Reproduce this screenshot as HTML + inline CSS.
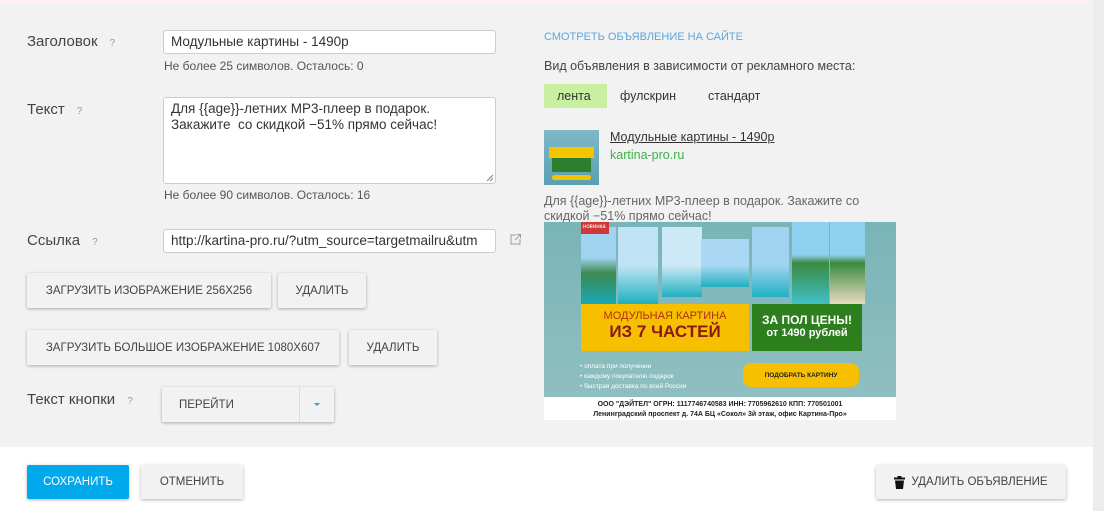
<!DOCTYPE html>
<html><head><meta charset="utf-8"><style>
*{margin:0;padding:0;box-sizing:border-box}
body{width:1104px;height:511px;overflow:hidden;background:#fff;font-family:"Liberation Sans",sans-serif;position:relative}
.panel{position:absolute;left:0;top:0;width:1093px;height:447px;background:#f2f2f2;border-top:3px solid #fdeff3}
.side{position:absolute;left:1093px;top:0;width:11px;height:511px;background:#ececec}
.a{position:absolute}
.lbl{font-size:15px;color:#444}
.q{font-size:10px;color:#999;margin-left:12px}
.inp{background:#fff;border:1px solid #ccc;border-radius:3px;font-size:13.5px;color:#333;padding:3px 7px;white-space:nowrap;overflow:hidden}
.hint{font-size:12px;color:#555}
.btn{background:#f2f2f2;border-radius:2px;box-shadow:0 1px 3px rgba(0,0,0,.3);font-size:11.5px;color:#444;display:flex;align-items:center;justify-content:center}
</style></head><body>
<div class="panel"></div><div class="side"></div>

<div class="a lbl" style="left:27px;top:33px">Заголовок<span class="q">?</span></div>
<div class="a inp" style="left:163px;top:30px;width:333px;height:24px">Модульные картины - 1490р</div>
<div class="a hint" style="left:164px;top:59px">Не более 25 символов. Осталось: 0</div>

<div class="a lbl" style="left:27px;top:101px">Текст<span class="q">?</span></div>
<div class="a inp" style="left:163px;top:97px;width:333px;height:87px;white-space:normal;line-height:16px;padding-top:3px">Для {{age}}-летних MP3-плеер в подарок.<br>Закажите&nbsp; со скидкой −51% прямо сейчас!</div>
<svg class="a" style="left:486px;top:174px" width="8" height="8"><path d="M1 7L7 1M4 7L7 4" stroke="#888"/></svg>
<div class="a hint" style="left:164px;top:188px">Не более 90 символов. Осталось: 16</div>

<div class="a lbl" style="left:27px;top:232px">Ссылка<span class="q">?</span></div>
<div class="a inp" style="left:163px;top:229px;width:333px;height:24px">http://kartina-pro.ru/?utm_source=targetmailru&amp;utm</div>
<svg class="a" style="left:508px;top:232px" width="14" height="14"><path d="M8 3H3v9h9V7" stroke="#999" fill="none"/><path d="M7 8L12 3M9 2.5h3.5V6" stroke="#999" fill="none"/></svg>

<div class="a btn" style="left:27px;top:273px;width:244px;height:35px">ЗАГРУЗИТЬ ИЗОБРАЖЕНИЕ 256X256</div>
<div class="a btn" style="left:278px;top:273px;width:88px;height:35px">УДАЛИТЬ</div>
<div class="a btn" style="left:27px;top:330px;width:312px;height:35px">ЗАГРУЗИТЬ БОЛЬШОЕ ИЗОБРАЖЕНИЕ 1080X607</div>
<div class="a btn" style="left:349px;top:330px;width:88px;height:35px">УДАЛИТЬ</div>

<div class="a lbl" style="left:27px;top:391px">Текст кнопки<span class="q">?</span></div>
<div class="a btn" style="left:162px;top:387px;width:172px;height:35px;justify-content:flex-start;padding-left:17px">ПЕРЕЙТИ</div>
<div class="a" style="left:299px;top:387px;width:1px;height:35px;background:#ddd"></div>
<div class="a" style="left:314px;top:403px;width:0;height:0;border-left:3px solid transparent;border-right:3px solid transparent;border-top:3px solid #3a9ad9"></div>

<div class="a btn" style="left:27px;top:465px;width:102px;height:34px;background:#00a8ec;color:#fff">СОХРАНИТЬ</div>
<div class="a btn" style="left:141px;top:465px;width:102px;height:34px">ОТМЕНИТЬ</div>
<div class="a btn" style="left:876px;top:465px;width:190px;height:34px"><svg width="11" height="13" style="margin-right:6px"><rect x="0" y="1.5" width="11" height="2" fill="#111"/><rect x="3.5" y="0" width="4" height="2" fill="#111"/><path d="M1 4.5h9l-1 8.5H2z" fill="#111"/></svg>УДАЛИТЬ ОБЪЯВЛЕНИЕ</div>

<div class="a" style="left:544px;top:31px;font-size:11px;color:#5aa7dd">СМОТРЕТЬ ОБЪЯВЛЕНИЕ НА САЙТЕ</div>
<div class="a" style="left:544px;top:59px;font-size:12.5px;color:#444">Вид объявления в зависимости от рекламного места:</div>
<div class="a" style="left:544px;top:84px;width:63px;height:24px;background:#c8f0a0"></div>
<div class="a" style="left:557px;top:89px;font-size:12.5px;color:#333">лента</div>
<div class="a" style="left:620px;top:89px;font-size:12.5px;color:#333">фулскрин</div>
<div class="a" style="left:708px;top:89px;font-size:12.5px;color:#333">стандарт</div>

<div class="a" style="left:544px;top:130px;width:55px;height:55px;background:linear-gradient(#7fb8c8,#5aa0b0)">
<div class="a" style="left:5px;top:17px;width:45px;height:11px;background:#f5c400"></div>
<div class="a" style="left:8px;top:28px;width:39px;height:14px;background:#2d7f2d"></div>
<div class="a" style="left:8px;top:45px;width:39px;height:5px;background:#f5c400;border-radius:3px"></div></div>
<div class="a" style="left:610px;top:130px;font-size:12.5px;color:#333;text-decoration:underline">Модульные картины - 1490р</div>
<div class="a" style="left:610px;top:148px;font-size:12.5px;color:#3cb04a">kartina-pro.ru</div>
<div class="a" style="left:544px;top:194px;font-size:12.5px;color:#666;line-height:15px;width:350px">Для {{age}}-летних MP3-плеер в подарок. Закажите со скидкой −51% прямо сейчас!</div>

<div class="a" style="left:544px;top:222px;width:352px;height:198px;background:#fff;overflow:hidden">
<div class="a" style="left:0;top:0;width:352px;height:175px;background:linear-gradient(#79b4b8,#8fbfc0)"></div>
<div class="a" style="left:37px;top:5px;width:35px;height:77px;background:linear-gradient(#9fd3f0 40%,#3d8a50 60%,#19a8b8)"></div>
<div class="a" style="left:74px;top:5px;width:40px;height:77px;background:linear-gradient(#bfe3f5 50%,#20b0c0)"></div>
<div class="a" style="left:118px;top:5px;width:40px;height:70px;background:linear-gradient(#cde8f7 55%,#20b0c0)"></div>
<div class="a" style="left:157px;top:17px;width:48px;height:48px;background:linear-gradient(#aad8f2 55%,#20b0c0)"></div>
<div class="a" style="left:208px;top:5px;width:37px;height:70px;background:linear-gradient(#9fd3f0 55%,#20b0c0)"></div>
<div class="a" style="left:248px;top:0;width:37px;height:82px;background:linear-gradient(#8fd0f0 40%,#3a8a40 50%,#40c0c8)"></div>
<div class="a" style="left:286px;top:0;width:35px;height:82px;background:linear-gradient(#8fd0f0 40%,#3a8a40 50%,#e8dcc0)"></div>
<div class="a" style="left:37px;top:0;width:28px;height:12px;background:#d03838;color:#fff;font-size:6px;padding:2px">новинка</div>
<div class="a" style="left:37px;top:82px;width:168px;height:47px;background:#f6c000;text-align:center">
<div style="font-size:11px;color:#b03010;margin-top:6px">МОДУЛЬНАЯ КАРТИНА</div><div style="font-size:17px;font-weight:bold;color:#8a1818">ИЗ 7 ЧАСТЕЙ</div></div>
<div class="a" style="left:208px;top:82px;width:110px;height:47px;background:#2d7f1e;color:#fff;text-align:center;font-weight:bold">
<div style="font-size:12px;margin-top:9px">ЗА ПОЛ ЦЕНЫ!</div><div style="font-size:11px">от 1490 рублей</div></div>
<div class="a" style="left:36px;top:140px;font-size:6.5px;color:#fff;line-height:10px">• оплата при получении<br>• каждому покупателю подарок<br>• быстрая доставка по всей России</div>
<div class="a" style="left:199px;top:141px;width:116px;height:24px;background:#f6c000;border-radius:8px;font-size:6.5px;font-weight:bold;color:#222;display:flex;align-items:center;justify-content:center">ПОДОБРАТЬ КАРТИНУ</div>
<div class="a" style="left:0;top:178px;width:352px;text-align:center;font-size:7px;font-weight:bold;color:#222;line-height:10px">ООО "ДЭЙТЕЛ" ОГРН: 1117746740583 ИНН: 7705962610 КПП: 770501001<br>Ленинградский проспект д. 74А БЦ «Сокол» 3й этаж, офис Картина-Про»</div>
</div>
</body></html>
